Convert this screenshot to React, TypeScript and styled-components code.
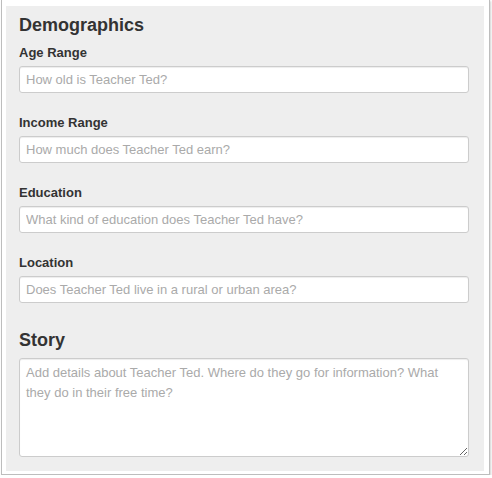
import React from "react"
import styled, { createGlobalStyle } from "styled-components"

const GlobalStyle = createGlobalStyle`
  html, body {
    margin: 0;
    padding: 0;
    background: #ffffff;
  }
  body {
    font-family: "Liberation Sans", Arial, Helvetica, sans-serif;
    color: #333333;
  }
`

const Frame = styled.div`
  box-sizing: border-box;
  width: 489px;
  height: 475px;
  margin-left: 1px;
  padding: 6px 5px 3px 4px;
  background: #ffffff;
  border: 1px solid #bdbdbd;
  border-top: none;
  box-shadow: 1px 1px 2px rgba(0, 0, 0, 0.18);
`

const Panel = styled.div`
  box-sizing: border-box;
  height: 465px;
  padding: 9px 13px 0 13px;
  background: #eeeeee;
  display: flex;
  flex-direction: column;
`

const Heading = styled.h2<{ $top?: number }>`
  margin: ${({ $top }) => $top ?? 0}px 0 0 0;
  font-size: 18px;
  line-height: 20px;
  font-weight: bold;
  color: #333333;
`

const Field = styled.div`
  display: flex;
  flex-direction: column;
  margin-top: 21px;

  &:first-of-type {
    margin-top: 9px;
  }
`

const Label = styled.label`
  font-size: 13px;
  line-height: 18px;
  font-weight: bold;
  color: #333333;
  margin-bottom: 4px;
`

const inputBase = `
  box-sizing: border-box;
  width: 450px;
  margin: 0;
  padding: 4px 6px;
  font-family: "Liberation Sans", Arial, Helvetica, sans-serif;
  font-size: 13px;
  line-height: 20px;
  color: #555555;
  background: #ffffff;
  border: 1px solid #cccccc;
  border-radius: 3px;
  box-shadow: inset 0 1px 1px rgba(0, 0, 0, 0.075);
  outline: none;

  &::placeholder {
    color: #aaaaaa;
  }
`

const TextInput = styled.input`
  ${inputBase}
  height: 27px;
`

const TextArea = styled.textarea`
  ${inputBase}
  height: 99px;
  margin-top: 8px;
  resize: vertical;
`

const fields = [
  { label: "Age Range", placeholder: "How old is Teacher Ted?" },
  { label: "Income Range", placeholder: "How much does Teacher Ted earn?" },
  { label: "Education", placeholder: "What kind of education does Teacher Ted have?" },
  { label: "Location", placeholder: "Does Teacher Ted live in a rural or urban area?" },
]

export default function App() {
  return (
    <>
      <GlobalStyle />
      <Frame>
        <Panel>
          <Heading>Demographics</Heading>
          {fields.map((f) => (
            <Field key={f.label}>
              <Label>{f.label}</Label>
              <TextInput type="text" placeholder={f.placeholder} />
            </Field>
          ))}
          <Heading $top={27}>Story</Heading>
          <TextArea placeholder="Add details about Teacher Ted. Where do they go for information? What they do in their free time?" />
        </Panel>
      </Frame>
    </>
  )
}
